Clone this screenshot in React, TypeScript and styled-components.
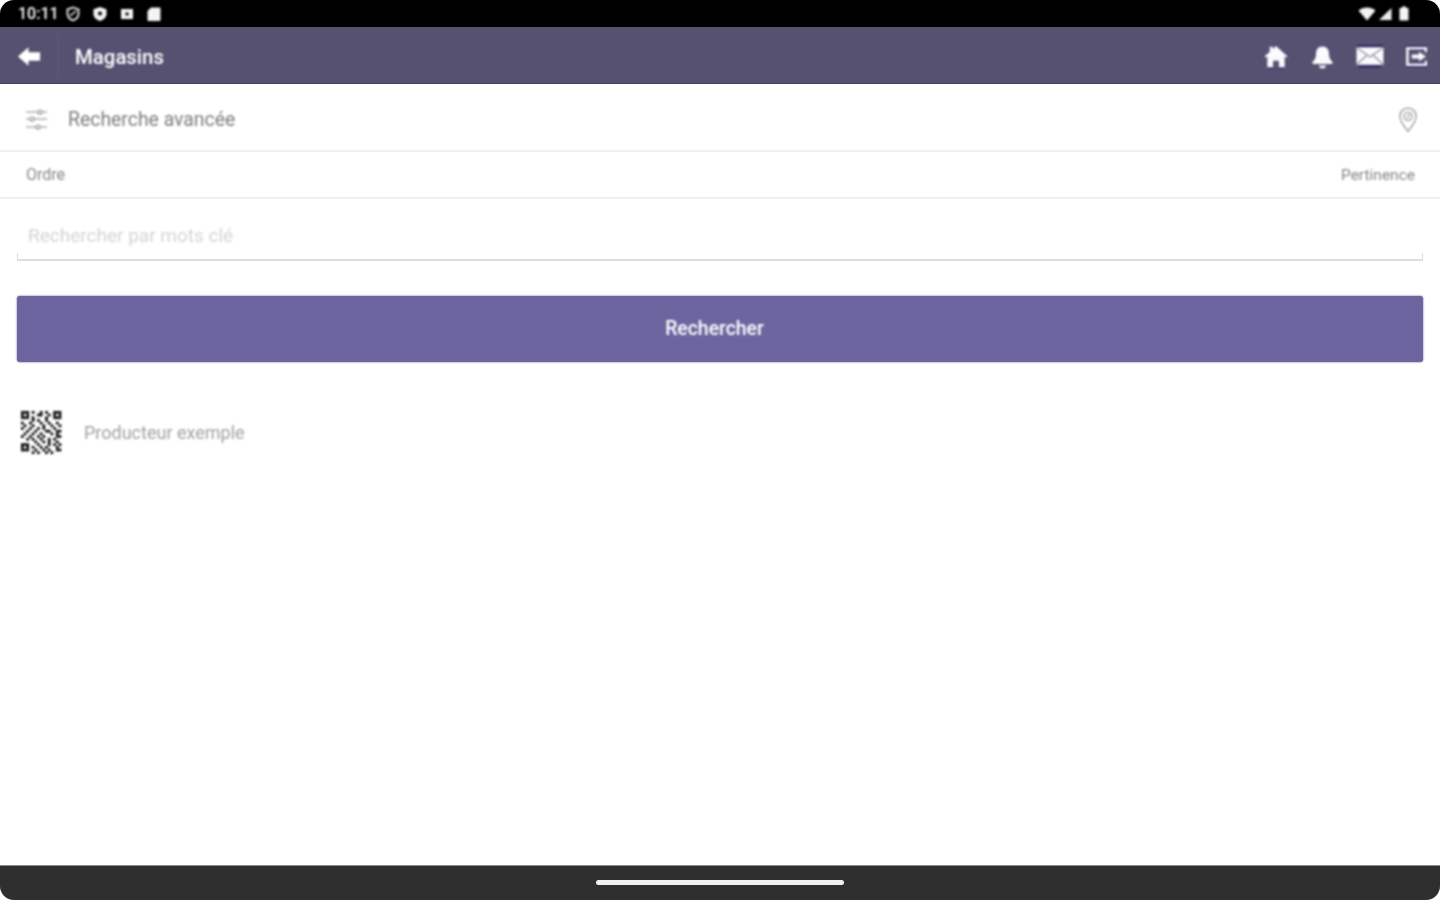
import React from "react";
import styled, { createGlobalStyle } from "styled-components";

const GlobalStyle = createGlobalStyle`
  html, body, #root {
    margin: 0;
    height: 100%;
    background: #fff;
  }
  body {
    font-family: Roboto, "Liberation Sans", sans-serif;
    overflow: hidden;
  }
`;

const Screen = styled.div`
  width: 1440px;
  height: 900px;
  display: flex;
  flex-direction: column;
  background: #fff;
`;

const StatusBar = styled.div`
  height: 27px;
  flex: none;
  box-sizing: border-box;
  padding: 0 31px 0 18px;
  display: flex;
  align-items: center;
  justify-content: space-between;
  background: #000;
  border-radius: 14px 14px 0 0;
  color: #fff;
`;

const StatusGroup = styled.div<{ $gap: number }>`
  display: flex;
  align-items: center;
  gap: ${(p) => p.$gap}px;
  filter: blur(0.8px);
`;

const Clock = styled.span`
  font-size: 16px;
  font-weight: 500;
  margin-right: -5px;
`;

const BatteryIcon = styled.svg`
  margin-left: 5px;
`;

const AppBar = styled.header`
  height: 57px;
  flex: none;
  box-sizing: border-box;
  padding-top: 3px;
  display: flex;
  align-items: stretch;
  background: #565071;
  border-bottom: 1px solid #47415f;
`;

const BackSlot = styled.div`
  width: 59px;
  display: flex;
  align-items: center;
  justify-content: center;
  border-right: 1px solid #625c7c;
  margin: 2px 0 3px;
  padding-top: 1px;
  box-sizing: border-box;
  filter: blur(0.8px);
`;

const AppTitle = styled.h1`
  flex: 1;
  margin: 0 0 0 16px;
  align-self: center;
  font-size: 20.400px;
  font-weight: 500;
  color: #fff;
  filter: blur(0.9px);
`;

const AppActions = styled.div`
  display: flex;
  align-items: center;
  gap: 22px;
  padding-right: 13px;
  filter: blur(0.8px);
`;

const FilterRow = styled.div`
  height: 68px;
  flex: none;
  box-sizing: border-box;
  padding: 4px 22px 0 25px;
  display: flex;
  align-items: center;
  border-bottom: 2px solid #f1f1f1;
`;

const SideIcon = styled.div`
  display: flex;
  filter: blur(0.8px);
`;

const FilterLabel = styled.span`
  flex: 1;
  margin-left: 20px;
  font-size: 19.400px;
  color: #7c7c7c;
  filter: blur(0.9px);
`;

const OrderRow = styled.div`
  height: 47px;
  flex: none;
  box-sizing: border-box;
  display: flex;
  align-items: center;
  justify-content: space-between;
  padding: 0 25px 0 26px;
  border-bottom: 2px solid #efefef;
`;

const OrderText = styled.span<{ $size: number }>`
  font-size: ${(p) => p.$size}px;
  color: #858585;
  filter: blur(0.9px);
`;

const Form = styled.div`
  padding: 0 17px;
`;

const KeywordField = styled.div`
  height: 62px;
  box-sizing: border-box;
  padding: 25px 0 0 11px;
  border-bottom: 2px solid #dedede;
  position: relative;
  &::before,
  &::after {
    content: "";
    position: absolute;
    bottom: 0;
    width: 1px;
    height: 6px;
    background: #dedede;
  }
  &::before {
    left: 0;
  }
  &::after {
    right: 0;
  }
`;

const KeywordHint = styled.span`
  font-size: 19px;
  color: #d4d4d4;
  filter: blur(0.9px);
  display: block;
`;

const SearchButton = styled.button`
  display: block;
  width: 100%;
  height: 66px;
  margin-top: 35px;
  border: 0;
  border-radius: 3px;
  background: #6c659f;
  box-shadow: 0 0 2px 0 #544c90;
  font-family: inherit;
  font-size: 19.400px;
  font-weight: 500;
  color: #fff;
  padding: 0 11px 2px 0;
`;

const ButtonLabel = styled.span`
  filter: blur(0.9px);
  display: inline-block;
`;

const ShopItem = styled.div`
  display: flex;
  align-items: center;
  margin-top: 48px;
  padding-left: 21px;
  height: 44px;
`;

const QrFrame = styled.div`
  width: 43px;
  height: 43px;
  filter: blur(1.200px);
`;

const ShopName = styled.span`
  margin-left: 20px;
  font-size: 18px;
  color: #a0a0a0;
  filter: blur(0.9px);
`;

const Spacer = styled.div`
  flex: 1;
`;

const NavBar = styled.div`
  height: 35px;
  flex: none;
  display: flex;
  align-items: center;
  justify-content: center;
  background: #2f2f2f;
  border-top: 1px solid #8a8a8a;
  border-radius: 0 0 14px 14px;
  box-sizing: border-box;
`;

const HomeHandle = styled.div`
  width: 248px;
  height: 5px;
  border-radius: 3px;
  background: #f0f0f0;
  margin-bottom: 1px;
`;

// finder blobs in three corners, the rest scattered
const qrRows = [
  "1110100101001110",
  "1010001100101010",
  "1110100001001110",
  "0000101001000000",
  "1001000100100100",
  "0100100010010010",
  "1001001010001000",
  "0010010001100110",
  "0100100100010100",
  "1001001010000110",
  "0010100100101000",
  "0000010010100100",
  "1110001000101010",
  "1010100101000100",
  "1110010010100110",
  "0000101001010000",
];

const QrCode = () => (
  <QrFrame>
    <svg width="43" height="43" viewBox="0 0 16 16">
      {qrRows.map((row, y) =>
        row.split("").map((cell, x) =>
          cell === "1" ? <rect key={`${x}-${y}`} x={x} y={y} width="1" height="1" fill="#000" /> : null
        )
      )}
    </svg>
  </QrFrame>
);

const App: React.FC = () => {
  return (
    <Screen>
      <GlobalStyle />
      <StatusBar>
        <StatusGroup $gap={11}>
          <Clock>10:11</Clock>
          <svg width="16" height="16" viewBox="0 0 16 16">
            <path d="M8 1.500 13.500 3.500V8c0 3-2.400 5.300-5.500 6.500C4.900 13.300 2.500 11 2.500 8V3.500Z" fill="none" stroke="#eee" strokeWidth="1.800" />
            <path d="M5 10l6-5" stroke="#eee" strokeWidth="1.500" />
          </svg>
          <svg width="16" height="16" viewBox="0 0 16 16">
            <path fillRule="evenodd" d="M8 1 14.500 3.200V8c0 3.200-2.700 5.800-6.500 7C4.200 13.800 1.500 11.200 1.500 8V3.200ZM8 5.500a2 2 0 1 0 0 4 2 2 0 0 0 0-4Z" fill="#f4f4f4" />
          </svg>
          <svg width="16" height="16" viewBox="0 0 16 16">
            <path fillRule="evenodd" d="M2 3h12v10H2ZM6.500 6.500v3h3v-3Z" fill="#f4f4f4" />
          </svg>
          <svg width="16" height="16" viewBox="0 0 16 16">
            <path d="M5 1.500H13.500a1 1 0 0 1 1 1V14a1 1 0 0 1-1 1H2.500a1 1 0 0 1-1-1V5Z" fill="#f4f4f4" />
          </svg>
        </StatusGroup>
        <StatusGroup $gap={2}>
          <svg width="18" height="14" viewBox="0 0 18 14">
            <path d="M0.500 3.500C5 -0.500 13 -0.500 17.500 3.500L9 13.500Z" fill="#f4f4f4" />
          </svg>
          <svg width="14" height="14" viewBox="0 0 14 14">
            <path d="M13.500 1V13H1Z" fill="#eee" />
          </svg>
          <BatteryIcon width="10" height="15" viewBox="0 0 10 15">
            <path d="M3 0.500H7V2H9.500V14.500H0.500V2H3Z" fill="#f4f4f4" />
          </BatteryIcon>
        </StatusGroup>
      </StatusBar>

      <AppBar>
        <BackSlot>
          <svg width="24" height="21" viewBox="0 0 26 22">
            <path d="M1 11 12.500 1V6.500H25V15.500H12.500V21Z" fill="#fff" />
          </svg>
        </BackSlot>
        <AppTitle>Magasins</AppTitle>
        <AppActions>
          <svg width="26" height="25" viewBox="0 0 27 25">
            <path d="M13.500 1.500 26 13h-3.500v11h-6v-7h-6v7h-6V13H1L7 7.500V2.500h3v2.300Z" fill="#fbfbfd" />
            <path d="M5 24.500h6M16 24.500h6" stroke="#1f1a66" strokeWidth="1" />
          </svg>
          <svg width="23" height="24" viewBox="0 0 23 24">
            <path d="M11.500 1.500c4.400 0 6.500 3 6.500 7.500 0 4 1.500 6 3.500 8v2H1.500v-2c2-2 3.500-4 3.500-8 0-4.500 2.100-7.500 6.500-7.500Z" fill="#fbfbfd" />
            <path d="M8 20.500a3.500 3 0 0 0 7 0Z" fill="#fbfbfd" />
          </svg>
          <svg width="28" height="25" viewBox="0 0 29 25">
            <rect x="0.500" y="3" width="28" height="18" fill="#fbfbfd" />
            <path d="M1 3.500 14.500 13 28 3.500M1 20.500l10-9M28 20.500l-10-9" fill="none" stroke="#8d89a2" strokeWidth="1.200" />
            <path d="M1 1.700H28M3 23.200H26" stroke="#1f1a66" strokeWidth="1.600" />
          </svg>
          <svg width="21" height="23" viewBox="0 0 22 23">
            <path d="M21 7V2.500H1.500V20.500H21V16" fill="none" stroke="#fbfbfd" strokeWidth="2.600" />
            <path d="M6 9.500h7.500V6.500l7.500 5-7.500 5v-3H6Z" fill="#fbfbfd" />
            <path d="M0 1h22M0 22h22" stroke="#1f1a66" strokeWidth="1.200" />
          </svg>
        </AppActions>
      </AppBar>

      <FilterRow>
        <SideIcon>
          <svg width="23" height="24" viewBox="0 0 23 24" fill="none" stroke="#8a8a8a" strokeWidth="1.100">
            <path d="M1 5h21M1 12h21M1 20h21" />
            <circle cx="15" cy="5" r="2" fill="#fff" />
            <circle cx="7" cy="12" r="2" fill="#fff" />
            <circle cx="13" cy="20" r="2" fill="#fff" />
          </svg>
        </SideIcon>
        <FilterLabel>Recherche avancée</FilterLabel>
        <SideIcon>
          <svg width="20" height="27" viewBox="0 0 22 28" fill="none" stroke="#8f8f8f" strokeWidth="1.300">
            <path d="M11 27C6 21 2 16 2 10.500a9 9 0 0 1 18 0C20 16 16 21 11 27Z" />
            <circle cx="11" cy="10.500" r="4.500" />
            <path d="M9.500 12 13 8.500" />
          </svg>
        </SideIcon>
      </FilterRow>

      <OrderRow>
        <OrderText $size={16}>Ordre</OrderText>
        <OrderText $size={15.5}>Pertinence</OrderText>
      </OrderRow>

      <Form>
        <KeywordField>
          <KeywordHint>Rechercher par mots clé</KeywordHint>
        </KeywordField>
        <SearchButton>
          <ButtonLabel>Rechercher</ButtonLabel>
        </SearchButton>
      </Form>

      <ShopItem>
        <QrCode />
        <ShopName>Producteur exemple</ShopName>
      </ShopItem>

      <Spacer />

      <NavBar>
        <HomeHandle />
      </NavBar>
    </Screen>
  );
};

export default App;
